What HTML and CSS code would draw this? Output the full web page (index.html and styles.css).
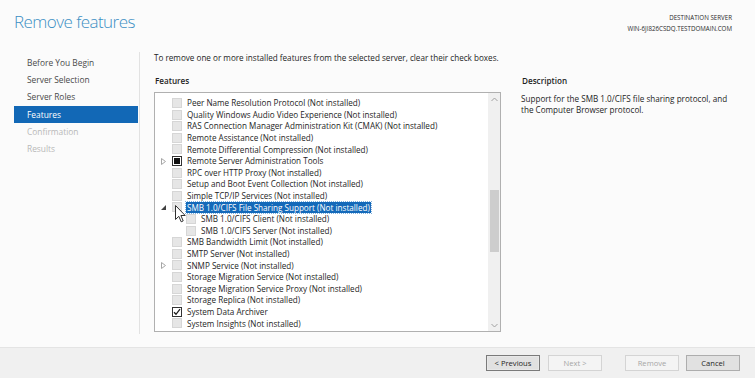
FILE: index.html
```html
<!DOCTYPE html>
<html>
<head>
<meta charset="utf-8">
<link rel="stylesheet" href="styles.css">
</head>
<body>
<div class="page">
  <header class="top">
    <h1 class="title">Remove features</h1>
    <div class="server">
      <div>DESTINATION SERVER</div>
      <div>WIN-6JI826CSDQ.TESTDOMAIN.COM</div>
    </div>
  </header>
  <div class="main">
    <nav class="nav">
      <div class="nav-item">Before You Begin</div>
      <div class="nav-item">Server Selection</div>
      <div class="nav-item">Server Roles</div>
      <div class="nav-item active">Features</div>
      <div class="nav-item disabled">Confirmation</div>
      <div class="nav-item disabled">Results</div>
    </nav>
    <section class="content">
      <p class="intro">To remove one or more installed features from the selected server, clear their check boxes.</p>
      <div class="columns">
        <div class="features">
          <h2 class="heading">Features</h2>
          <div class="listbox">
            <div class="tree">
              <div class="row"><span class="exp"></span><span class="cb"></span><span class="label">Peer Name Resolution Protocol (Not installed)</span></div>
              <div class="row"><span class="exp"></span><span class="cb"></span><span class="label">Quality Windows Audio Video Experience (Not installed)</span></div>
              <div class="row"><span class="exp"></span><span class="cb"></span><span class="label">RAS Connection Manager Administration Kit (CMAK) (Not installed)</span></div>
              <div class="row"><span class="exp"></span><span class="cb"></span><span class="label">Remote Assistance (Not installed)</span></div>
              <div class="row"><span class="exp"></span><span class="cb"></span><span class="label">Remote Differential Compression (Not installed)</span></div>
              <div class="row"><span class="exp"><svg width="5" height="7" viewBox="0 0 5 7"><path d="M0.5 0.5 L4.5 3.5 L0.5 6.5 Z" fill="none" stroke="#a6a6a6" stroke-width="1"/></svg></span><span class="cb partial"><span class="fill"></span></span><span class="label">Remote Server Administration Tools</span></div>
              <div class="row"><span class="exp"></span><span class="cb"></span><span class="label">RPC over HTTP Proxy (Not installed)</span></div>
              <div class="row"><span class="exp"></span><span class="cb"></span><span class="label">Setup and Boot Event Collection (Not installed)</span></div>
              <div class="row"><span class="exp"></span><span class="cb"></span><span class="label">Simple TCP/IP Services (Not installed)</span></div>
              <div class="row"><span class="exp"><svg width="5" height="5" viewBox="0 0 5 5"><path d="M5 0 L5 5 L0 5 Z" fill="#404040"/></svg></span><span class="cb"></span><span class="label selected">SMB 1.0/CIFS File Sharing Support (Not installed)</span></div>
              <div class="row child"><span class="exp"></span><span class="cb"></span><span class="label">SMB 1.0/CIFS Client (Not installed)</span></div>
              <div class="row child"><span class="exp"></span><span class="cb"></span><span class="label">SMB 1.0/CIFS Server (Not installed)</span></div>
              <div class="row"><span class="exp"></span><span class="cb"></span><span class="label">SMB Bandwidth Limit (Not installed)</span></div>
              <div class="row"><span class="exp"></span><span class="cb"></span><span class="label">SMTP Server (Not installed)</span></div>
              <div class="row"><span class="exp"><svg width="5" height="7" viewBox="0 0 5 7"><path d="M0.5 0.5 L4.5 3.5 L0.5 6.5 Z" fill="none" stroke="#a6a6a6" stroke-width="1"/></svg></span><span class="cb"></span><span class="label">SNMP Service (Not installed)</span></div>
              <div class="row"><span class="exp"></span><span class="cb"></span><span class="label">Storage Migration Service (Not installed)</span></div>
              <div class="row"><span class="exp"></span><span class="cb"></span><span class="label">Storage Migration Service Proxy (Not installed)</span></div>
              <div class="row"><span class="exp"></span><span class="cb"></span><span class="label">Storage Replica (Not installed)</span></div>
              <div class="row"><span class="exp"></span><span class="cb checked"><svg width="8" height="8" viewBox="0 0 8 8"><path d="M1 4.2 L3 6.3 L7 1.2" fill="none" stroke="#1a1a1a" stroke-width="1.3"/></svg></span><span class="label">System Data Archiver</span></div>
              <div class="row"><span class="exp"></span><span class="cb"></span><span class="label">System Insights (Not installed)</span></div>
            </div>
            <div class="scrollbar">
              <div class="arrow"><svg width="7" height="5" viewBox="0 0 7 5"><path d="M0.5 4 L3.5 1 L6.5 4" fill="none" stroke="#a0a0a0" stroke-width="1"/></svg></div>
              <div class="track-top"></div>
              <div class="thumb"></div>
              <div class="track-bottom"></div>
              <div class="arrow"><svg width="7" height="5" viewBox="0 0 7 5"><path d="M0.5 1 L3.5 4 L6.5 1" fill="none" stroke="#a0a0a0" stroke-width="1"/></svg></div>
            </div>
            <svg class="cursor" width="11" height="18" viewBox="0 0 11 18"><path d="M0.5 0.5 L0.5 14.5 L3.8 11.3 L6.2 16.8 L8.2 15.9 L5.9 10.5 L10.2 10.5 Z" fill="#ffffff" stroke="#303030" stroke-width="1" stroke-linejoin="round"/></svg>
          </div>
        </div>
        <div class="description">
          <h2 class="heading">Description</h2>
          <p class="desc-text">Support for the SMB 1.0/CIFS file sharing protocol, and the Computer Browser protocol.</p>
        </div>
      </div>
    </section>
  </div>
  <footer class="footer">
    <button class="btn focus">&lt; Previous</button>
    <button class="btn disabled">Next &gt;</button>
    <button class="btn disabled remove">Remove</button>
    <button class="btn">Cancel</button>
  </footer>
</div>
</body>
</html>
```
FILE: styles.css
```css
* { box-sizing: border-box; }
html, body { margin: 0; padding: 0; }
body {
  width: 755px;
  height: 378px;
  overflow: hidden;
  background: #fbfbfb;
  font-family: "Open Sans", "Noto Sans", sans-serif;
  color: #1e1e1e;
  font-size: 8.15px;
}
.page {
  display: flex;
  flex-direction: column;
  height: 378px;
}
.top {
  display: flex;
  justify-content: space-between;
  align-items: flex-start;
  height: 52px;
  padding: 0 23px 0 14px;
}
.title {
  margin: 10px 0 0 0;
  font-weight: 300;
  font-size: 17px;
  line-height: 24px;
  color: #3b8fc4;
  letter-spacing: -0.55px;
}
.server {
  margin-top: 12px;
  text-align: right;
  font-size: 6.2px;
  line-height: 11px;
  color: #2a2a2a;
}
.main {
  display: grid;
  grid-template-columns: 126px 1fr;
  height: 282px;
  padding-left: 14px;
}
.nav {
  border-right: 1px solid #e2e2e2;
  padding-top: 1.5px;
}
.nav-item {
  height: 17.4px;
  line-height: 17.4px;
  padding-left: 13px;
  font-size: 8.4px;
  color: #4a4a4a;
}
.nav-item.active {
  background: #1268b6;
  color: #ffffff;
  margin-right: 1px;
}
.nav-item.disabled { color: #b8b8b8; }
.content {
  padding-left: 14px;
}
.intro {
  margin: 0;
  line-height: 11px;
  font-size: 8.15px;
  color: #1e1e1e;
}
.columns {
  display: flex;
  gap: 20px;
  margin-top: 12px;
}
.features { width: 347px; }
.heading {
  margin: 0 0 6px 1px;
  font-size: 8.15px;
  line-height: 11px;
  font-weight: 600;
  color: #1e1e1e;
}
.listbox {
  position: relative;
  display: flex;
  height: 240px;
  border: 1px solid #b0b0b0;
  background: #ffffff;
}
.tree {
  flex: 1;
  padding-top: 4.3px;
  overflow: hidden;
}
.row {
  display: flex;
  align-items: center;
  height: 11.6px;
  white-space: nowrap;
}
.exp {
  width: 17px;
  display: flex;
  align-items: center;
  justify-content: center;
  padding-right: 1px;
  flex: none;
}
.exp svg { display: block; }
.cb {
  width: 10px;
  height: 10px;
  flex: none;
  background: #e6e6e6;
  border: 1px solid #d6d6d6;
  display: flex;
  align-items: center;
  justify-content: center;
}
.cb.partial {
  background: #ffffff;
  border: 1px solid #333333;
}
.cb.partial .fill {
  width: 6px;
  height: 6px;
  background: #111111;
}
.cb.checked {
  background: #ffffff;
  border: 1px solid #333333;
}
.row.child { padding-left: 14px; }
.label {
  margin-left: 4px;
  padding: 0 1px;
  line-height: 11.6px;
  font-size: 8.15px;
  color: #1e1e1e;
}
.label.selected {
  background: #1469b9;
  color: #ffffff;
  outline: 1px dotted #7fb2e0;
}
.scrollbar {
  width: 12px;
  flex: none;
  display: flex;
  flex-direction: column;
  background: #f0f0f0;
  border-left: 1px solid #f0f0f0;
}
.arrow {
  height: 12px;
  display: flex;
  align-items: center;
  justify-content: center;
}
.track-top { height: 85px; }
.thumb {
  height: 62px;
  background: #cdcdcd;
  margin: 0 1px;
}
.track-bottom { flex: 1; }
.cursor {
  position: absolute;
  left: 20px;
  top: 112px;
}
.description { width: 215px; }
.desc-text {
  margin: 7px 0 0 0;
  font-size: 8.15px;
  line-height: 11.4px;
  color: #1e1e1e;
}
.footer {
  margin-top: 13px;
  flex: 1;
  background: #f0f0f0;
  border-top: 1px solid #e4e4e4;
  display: flex;
  justify-content: flex-end;
  align-items: flex-start;
  padding: 7px 15px 0 0;
  gap: 8px;
}
.btn {
  width: 54px;
  height: 16px;
  padding: 0;
  font-family: "Open Sans", "Noto Sans", sans-serif;
  font-size: 7.6px;
  color: #1e1e1e;
  background: #e1e1e1;
  border: 1px solid #adadad;
  border-radius: 0;
}
.btn.focus {
  border: 1px solid #7a7a7a;
  box-shadow: inset 0 0 0 1px #e8e8e8;
}
.btn.disabled {
  background: #f4f4f4;
  border-color: #d4d4d4;
  color: #a6a6a6;
}
.btn.remove { margin-left: 15px; margin-right: -1px; }
```
